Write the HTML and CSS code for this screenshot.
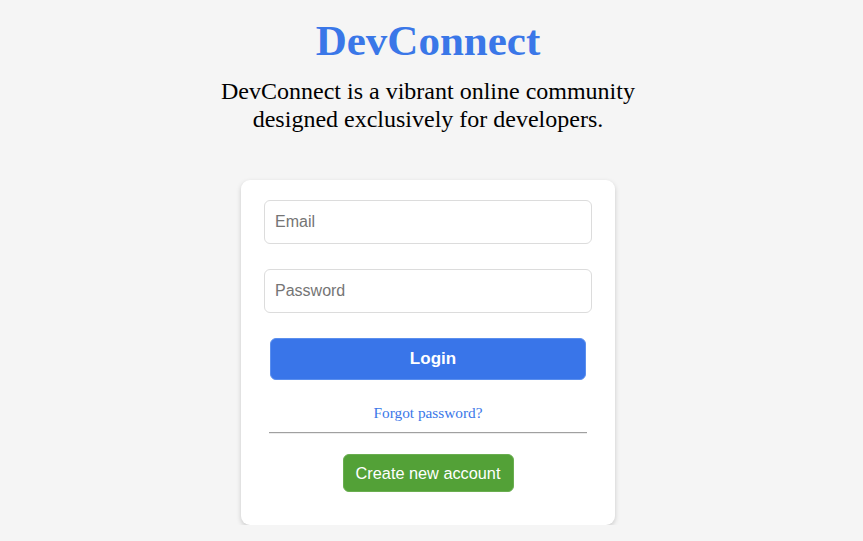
FILE: index.html
```html
<!DOCTYPE html>
<html lang="en">
<head>
<meta charset="utf-8">
<title>DevConnect</title>
<link rel="stylesheet" href="styles.css">
</head>
<body>
<main class="page">
  <h1 class="title">DevConnect</h1>
  <p class="tagline">DevConnect is a vibrant online community designed exclusively for developers.</p>
  <form class="card">
    <input class="field" type="email" placeholder="Email">
    <input class="field" type="password" placeholder="Password">
    <button class="login" type="button">Login</button>
    <a class="forgot" href="#">Forgot password?</a>
    <hr class="divider">
    <button class="create" type="button">Create new account</button>
  </form>
</main>
</body>
</html>
```

FILE: styles.css
```css
html, body {
  margin: 0;
  padding: 0;
  background: #f5f5f5;
}

.page {
  display: flex;
  flex-direction: column;
  align-items: center;
  padding: 16px 7px 0 0;
  font-family: "Liberation Serif", "Times New Roman", serif;
}

.title {
  margin: 0;
  font-size: 43px;
  font-weight: bold;
  color: #3a77e8;
  line-height: normal;
}

.tagline {
  margin: 12px 0 0;
  max-width: 440px;
  font-size: 24px;
  line-height: 28px;
  text-align: center;
  color: #000;
}

.card {
  margin-top: 47px;
  box-sizing: border-box;
  width: 374px;
  padding: 20px 23px 33px;
  background: #fff;
  border-radius: 9px;
  box-shadow: 0 2px 5px rgba(0, 0, 0, 0.18);
  display: flex;
  flex-direction: column;
  align-items: stretch;
}

.field {
  box-sizing: border-box;
  height: 44px;
  margin: 0 0 25px;
  padding: 0 10px;
  border: 1px solid #dcdcdc;
  border-radius: 6px;
  font-family: "Liberation Sans", Arial, sans-serif;
  font-size: 16px;
  color: #333;
  background: #fff;
  outline: none;
}

.field::placeholder {
  color: #757575;
}

.login {
  box-sizing: border-box;
  height: 42px;
  margin: 0 6px;
  padding: 0 0 0 10px;
  border: 1px solid #5b8fee;
  border-radius: 6px;
  background: #3975e9;
  color: #fff;
  font-family: "Liberation Sans", Arial, sans-serif;
  font-size: 17px;
  font-weight: bold;
  cursor: pointer;
}

.forgot {
  margin-top: 24px;
  align-self: center;
  font-size: 15.3px;
  line-height: normal;
  color: #3a77e8;
  text-decoration: none;
}

.divider {
  margin: 10px 5px 0;
  height: 0;
  border: 0;
  border-top: 1px solid #a0a0a0;
  border-bottom: 1px solid #ececec;
}

.create {
  margin-top: 20px;
  align-self: center;
  box-sizing: border-box;
  height: 38px;
  width: 171px;
  padding: 0;
  border: 1px solid #6aae50;
  border-radius: 6px;
  background: #53a137;
  color: #fff;
  font-family: "Liberation Sans", Arial, sans-serif;
  font-size: 16.3px;
  cursor: pointer;
}
```
